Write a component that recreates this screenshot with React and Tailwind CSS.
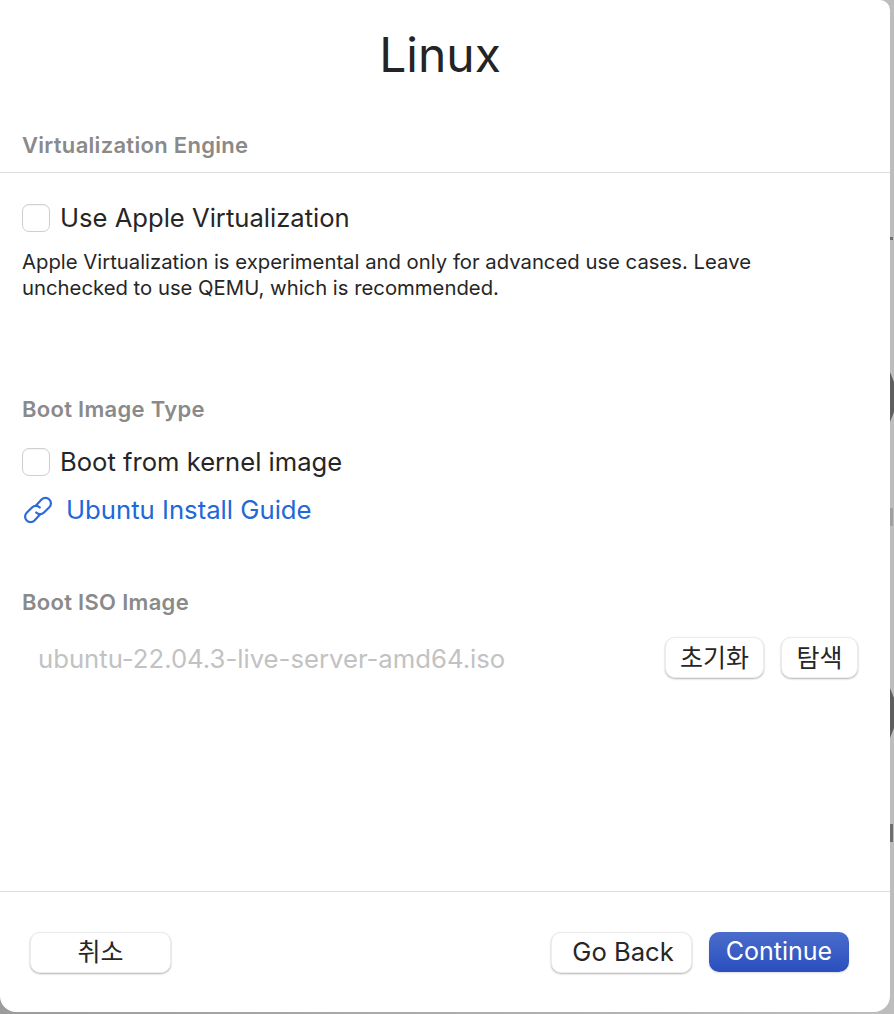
import React from 'react';

const FONT = 'font-["Inter","Noto_Sans_CJK_KR",sans-serif]';

function SectionLabel({ children }) {
  return <div className="text-[22px] leading-[24px] tracking-[0.3px] font-semibold text-[#8a8a8a]">{children}</div>;
}

function CheckRow({ label }) {
  return (
    <div className="flex items-center gap-[10px]">
      <div className="w-[28px] h-[28px] rounded-[7px] bg-white border border-[#cfcfcf] shadow-[inset_0_1px_1px_rgba(0,0,0,0.04)]" />
      <span className="text-[25.6px] leading-[30px] text-[#262626]">{label}</span>
    </div>
  );
}

function Button({ children, className = '' }) {
  return (
    <button className={`h-[41px] rounded-[10px] bg-white text-[25px] leading-[30px] text-[#262626] border border-[#ececec] shadow-[0_1px_2px_rgba(0,0,0,0.3)] flex items-center justify-center ${className}`}>
      {children}
    </button>
  );
}

function LinkIcon() {
  return (
    <svg width="30" height="30" viewBox="0 0 30 30" fill="none" stroke="#2f6bd8" strokeWidth="2.2" strokeLinecap="round" className="ml-[1px] mr-[-1px]">
      <path d="M13 10.5 L18.5 4.5 a5.5 5.5 0 0 1 7.8 0 a5.5 5.5 0 0 1 0 7.8 L21 17.5 a5.5 5.5 0 0 1 -7.8 0" />
      <path d="M17 19.5 L11.5 25.5 a5.5 5.5 0 0 1 -7.8 0 a5.5 5.5 0 0 1 0 -7.8 L9 12.5 a5.5 5.5 0 0 1 7.8 0" />
    </svg>
  );
}

export default function App() {
  return (
    <div className={`w-[894px] h-[1014px] flex overflow-hidden bg-gradient-to-r from-[#9c9c9c] to-[#bdbdbd] ${FONT}`}>
      <div className="w-[890px] h-[1012px] bg-white rounded-tr-[10px] rounded-br-[16px] rounded-bl-[16px] flex flex-col shrink-0">
        <h1 className="pt-[25px] pr-[10px] h-[133px] text-center text-[48px] leading-[60px] font-normal text-[#242424]">Linux</h1>

        <div className="px-[22px] pb-[14px] h-[39px]">
          <SectionLabel>Virtualization Engine</SectionLabel>
        </div>
        <div className="h-px bg-[#dedede]" />

        <div className="px-[22px] pt-[30px]">
          <CheckRow label="Use Apple Virtualization" />
          <p className="mt-[16px] text-[20.3px] leading-[26px] text-[#262626]">
            Apple Virtualization is experimental and only for advanced use cases. Leave
            <br />
            unchecked to use QEMU, which is recommended.
          </p>

          <div className="mt-[96px]">
            <SectionLabel>Boot Image Type</SectionLabel>
          </div>
          <div className="mt-[26px]">
            <CheckRow label="Boot from kernel image" />
          </div>
          <div className="mt-[18px] flex items-center gap-[14px]">
            <LinkIcon />
            <span className="text-[25.7px] leading-[30px] text-[#2168d8]">Ubuntu Install Guide</span>
          </div>

          <div className="mt-[65px]">
            <SectionLabel>Boot ISO Image</SectionLabel>
          </div>
          <div className="mt-[23px] pl-[16px] pr-[10px] flex items-center">
            <span className="flex-1 pt-[2px] text-[25.7px] leading-[30px] text-[#c2c2c2]">ubuntu-22.04.3-live-server-amd64.iso</span>
            <Button className="w-[99px] mr-[17px]">초기화</Button>
            <Button className="w-[77px]">탐색</Button>
          </div>
        </div>

        <div className="mt-auto h-[121px] border-t border-[#dedede] pl-[30px] pr-[41px] pt-[40px] flex items-start">
          <Button className="w-[141px] pb-[2px]">취소</Button>
          <div className="ml-auto flex gap-[17px]">
            <Button className="w-[141px] pl-[3px] pb-[2px]"><span className="text-[25.6px]">Go Back</span></Button>
            <button className="w-[140px] h-[40px] pb-[2px] rounded-[10px] bg-gradient-to-b from-[#4a6ccb] to-[#2a4fbe] text-white text-[25px] leading-[30px] shadow-[0_1px_2px_rgba(0,0,0,0.15)] flex items-center justify-center">
              Continue
            </button>
          </div>
        </div>
      </div>

      <svg width="4" height="1014" viewBox="0 0 4 1014" className="shrink-0">
        <rect x="0" y="237" width="3" height="3" fill="#6e6e6e" />
        <path d="M0 372 L4 382 L4 412 L0 422 Z" fill="#5f5f5f" />
        <rect x="0" y="508" width="3" height="18" fill="#a0a0a0" />
        <path d="M0 688 L4 698 L4 728 L0 738 Z" fill="#5f5f5f" />
        <rect x="0" y="824" width="3" height="18" fill="#6e6e6e" />
      </svg>
    </div>
  );
}
